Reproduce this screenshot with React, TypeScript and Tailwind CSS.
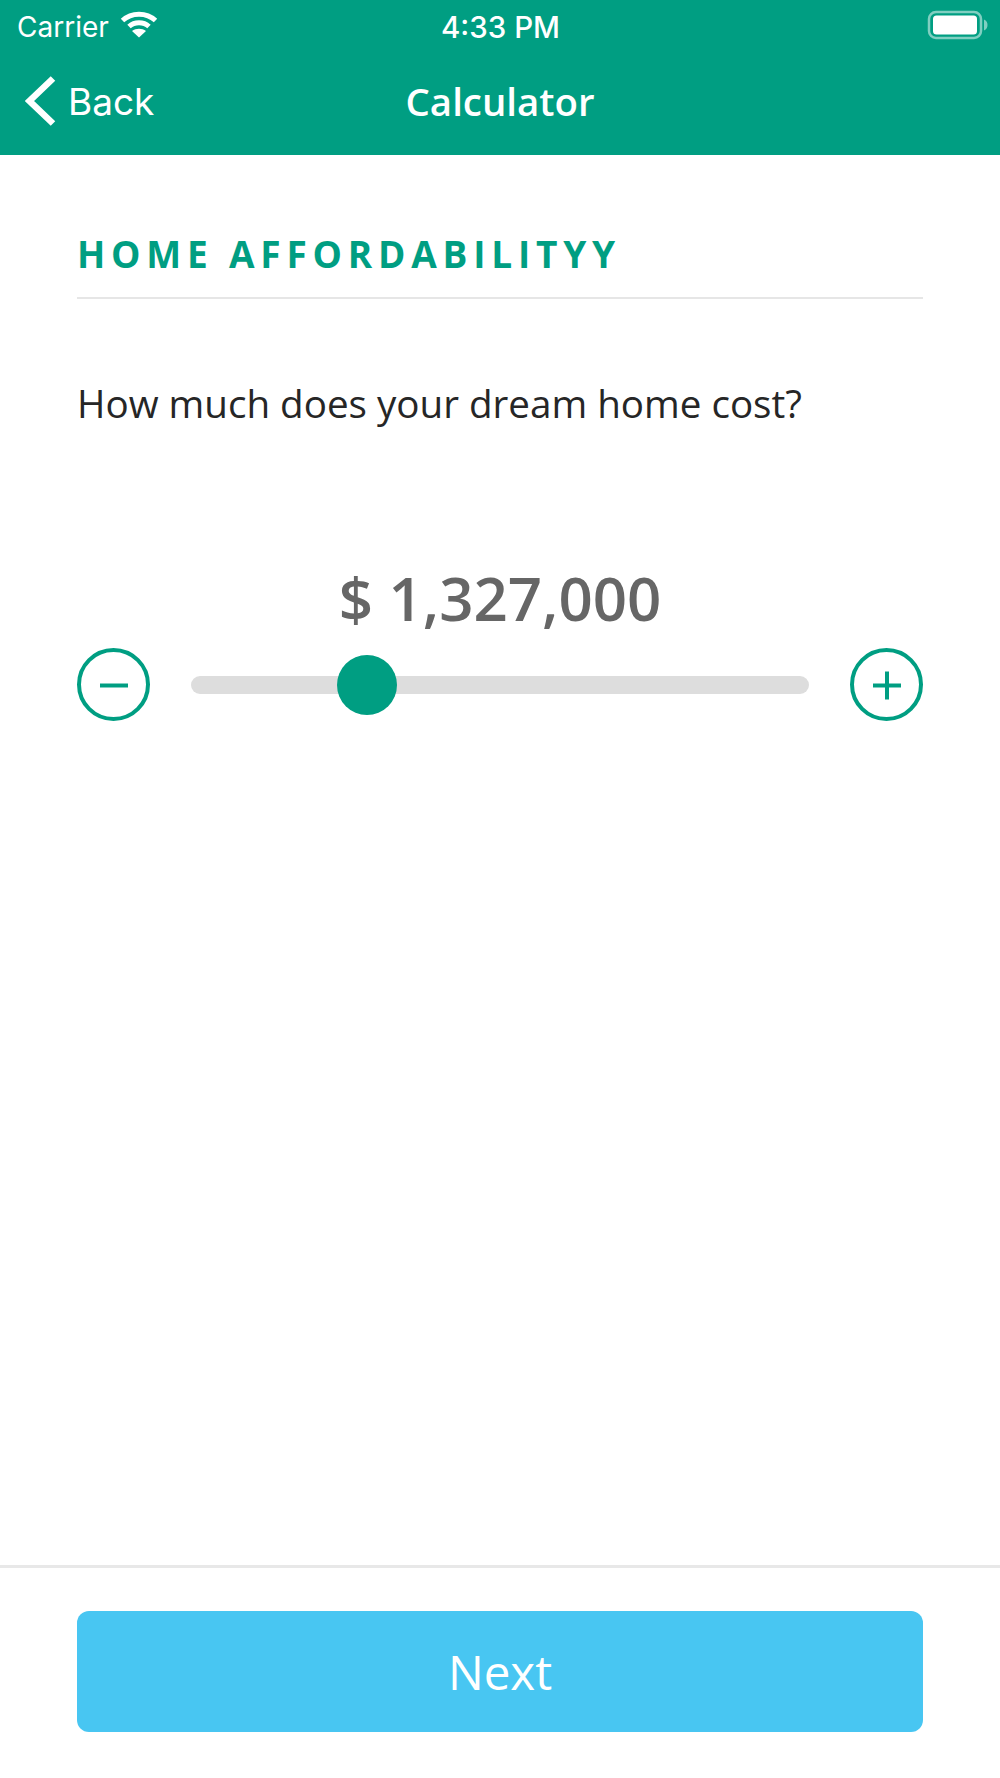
import React from "react";

const StatusBar = () => (
  <div className="relative h-[50px] text-white font-['Inter',sans-serif]">
    <div className="absolute left-[17px] top-[10px] flex items-center gap-[11px]">
      <span className="text-[28px] font-normal leading-[34px]">Carrier</span>
      <svg width="38" height="28" viewBox="0 0 38 28" fill="none" stroke="white" strokeWidth="5" className="mb-[6px]">
        <path d="M2.5 10.5C11.5 2 26.5 2 35.5 10.5" />
        <path d="M9 16.5C14.5 11.5 23.5 11.5 29 16.5" />
        <path d="M19 27.5L12 21C16 18 22 18 26 21Z" fill="white" stroke="none" />
      </svg>
    </div>
    <span className="absolute left-[441px] top-[10px] text-[29.5px] font-medium leading-[34px]">4:33 PM</span>
    <svg width="62" height="30" viewBox="0 0 62 30" fill="none" className="absolute left-[927px] top-[10px]">
      <rect x="2" y="2" width="52" height="26" rx="7" stroke="white" strokeOpacity="0.5" strokeWidth="2.5" />
      <rect x="6" y="5.5" width="44" height="19" rx="3.5" fill="white" />
      <path d="M57 9.5C59.5 10.5 60.5 12.5 60.5 15C60.5 17.5 59.5 19.5 57 20.5Z" fill="white" fillOpacity="0.5" />
    </svg>
  </div>
);

const NavBar = () => (
  <div className="relative h-[105px] flex items-start justify-center pt-[26px] text-white">
    <div className="absolute left-[25px] top-[26px] flex items-center gap-[12px] font-['Inter',sans-serif]">
      <svg width="31" height="50" viewBox="0 0 31 50" fill="none" stroke="white" strokeWidth="6.5">
        <path d="M28 2.5L4.5 25L28 47.5" />
      </svg>
      <span className="text-[37px] leading-none">Back</span>
    </div>
    <span className="text-[38.4px] font-semibold leading-[50px]">Calculator</span>
  </div>
);

const RoundButton = ({ plus }: { plus?: boolean }) => (
  <button className="w-[73px] h-[73px] shrink-0 rounded-full border-[4px] border-[#009e82] flex items-center justify-center">
    <svg width="30" height="30" viewBox="0 0 30 30" fill="none" stroke="#009e82" strokeWidth="4">
      <path d="M1 15.5H29" />
      {plus && <path d="M15 1.5V29.5" />}
    </svg>
  </button>
);

export default function App() {
  return (
    <div className="w-[1000px] h-[1778px] bg-white flex flex-col font-['Open_Sans',sans-serif]">
      <div className="bg-[#009e82] h-[155px] shrink-0">
        <StatusBar />
        <NavBar />
      </div>

      <div className="flex-1 px-[77px]">
        <div className="pt-[74px] pb-[18px] border-b-[2px] border-[#e6e6e6]">
          <h1 className="text-[37px] font-bold leading-[50px] tracking-[5.8px] text-[#009e82]">HOME AFFORDABILITYY</h1>
        </div>
        <p className="mt-[79px] text-[38.6px] leading-[50px] text-[#262626]">How much does your dream home cost?</p>

        <div className="mt-[136px] text-center text-[60px] font-semibold leading-[68px] text-[#666666]">$ 1,327,000</div>

        <div className="mt-[16px] flex items-center gap-[41px]">
          <RoundButton />
          <div className="relative flex-1 h-[18px] rounded-full bg-[#dddddd]">
            <div className="absolute left-[146px] top-[-21px] w-[60px] h-[60px] rounded-full bg-[#009e82]" />
          </div>
          <RoundButton plus />
        </div>
      </div>

      <div className="shrink-0 border-t-[3px] border-[#e8e8e8] h-[213px] pt-[43px] px-[77px]">
        <button className="w-full h-[121px] rounded-[12px] bg-[#48c6f2] text-white text-[47.5px] font-normal leading-none">Next</button>
      </div>
    </div>
  );
}
